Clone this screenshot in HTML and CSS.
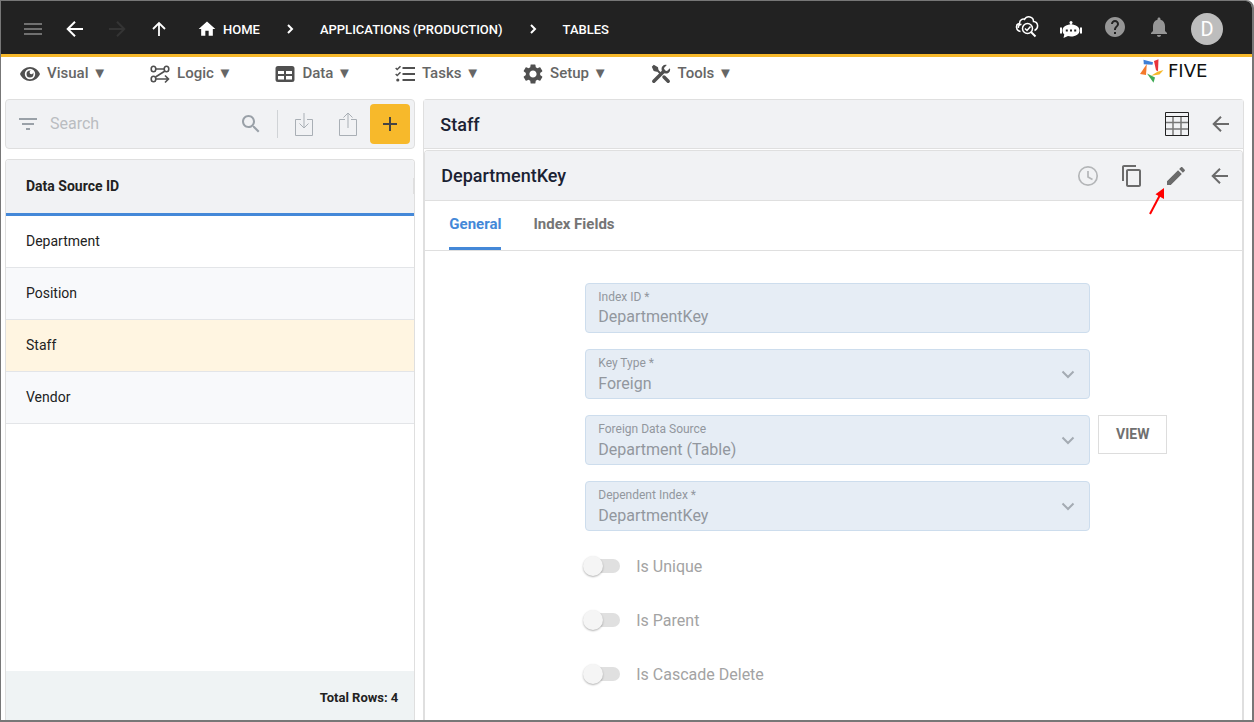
FILE: index.html
```html
<!DOCTYPE html>
<html lang="en">
<head>
<meta charset="utf-8">
<meta name="viewport" content="width=device-width, initial-scale=1">
<title>Five - Tables</title>
<link rel="stylesheet" href="styles.css">
</head>
<body>
<div class="window">
  <header class="topbar">
    <div class="history">
      <button class="icon-btn dim" aria-label="Menu"><svg width="24" height="24" viewBox="0 0 24 24"><path fill="currentColor" d="M3 18h18v-2H3v2zm0-5h18v-2H3v2zm0-7v2h18V6H3z"/></svg></button>
      <button class="icon-btn" aria-label="Back"><svg width="24" height="24" viewBox="0 0 24 24"><path fill="none" stroke="currentColor" stroke-width="2" d="M20 12H5M12 4.700L4.700 12L12 19.300"/></svg></button>
      <button class="icon-btn faint" aria-label="Forward" disabled><svg width="24" height="24" viewBox="0 0 24 24"><path fill="none" stroke="currentColor" stroke-width="2" d="M4 12H19M12 4.700L19.300 12L12 19.300"/></svg></button>
      <button class="icon-btn" aria-label="Up"><svg width="24" height="24" viewBox="0 0 24 24"><path fill="none" stroke="currentColor" stroke-width="1.800" d="M12 19V6M6 12L12 6L18 12"/></svg></button>
    </div>
    <nav class="crumbs" aria-label="Breadcrumb">
      <a href="#"><svg width="20" height="20" viewBox="0 0 24 24"><path fill="currentColor" d="M10 20v-6h4v6h5v-8h3L12 3 2 12h3v8z"/></svg>HOME</a>
      <svg class="sep" width="20" height="20" viewBox="0 0 20 20"><path fill="none" stroke="currentColor" stroke-width="2" d="M8 6l4 4-4 4"/></svg>
      <a href="#">APPLICATIONS (PRODUCTION)</a>
      <svg class="sep" width="20" height="20" viewBox="0 0 20 20"><path fill="none" stroke="currentColor" stroke-width="2" d="M8 6l4 4-4 4"/></svg>
      <a href="#">TABLES</a>
    </nav>
    <div class="account">
      <button class="tool raised" aria-label="Inspect"><svg width="24" height="24" viewBox="0 0 24 24" fill="none" stroke="currentColor" stroke-width="1.500"><path d="M5.500 17.500C.5 16.500.2 10 4.500 9.500C4.500 5.500 8 4.500 9.500 5.500C12 1 18.500 2.500 18.500 7.500C23.500 8 24 14.500 19.500 16.500M6.500 10.500C4.500 10 3 12 3.500 14"/><circle cx="12.500" cy="14.500" r="5"/><path d="M10 14.500l2 2 3.500-4"/><path stroke-width="2" d="M16 18l4.500 4.500"/></svg></button>
      <button class="tool" aria-label="Assistant"><svg width="24" height="24" viewBox="0 0 24 24" fill="currentColor"><circle cx="12" cy="5.500" r="1.500"/><path d="M11.300 6h1.400v3h-1.400zM1 10.500h2v6H1zM21 10.500h2v6h-2zM12 7.500c5 0 8.500 2.500 8.500 6s-3.500 6-8.500 6c-1 0-2-.1-3-.4L4.500 21l.8-3.400C4.200 16.500 3.500 15 3.500 13.500c0-3.500 3.500-6 8.500-6z"/><path fill="#222" d="M6.800 12.500h2v2h-2zM11 12.500h2v2h-2zM15.200 12.500h2v2h-2z"/></svg></button>
      <button class="tool gray" aria-label="Help"><svg width="24" height="24" viewBox="0 0 24 24"><path fill="currentColor" d="M12 2C6.480 2 2 6.480 2 12s4.480 10 10 10 10-4.480 10-10S17.520 2 12 2zm1 17h-2v-2h2v2zm2.070-7.750l-.9.920C13.450 12.900 13 13.500 13 15h-2v-.5c0-1.100.450-2.100 1.170-2.830l1.240-1.260c.370-.360.590-.860.590-1.410 0-1.100-.9-2-2-2s-2 .9-2 2H8c0-2.210 1.790-4 4-4s4 1.790 4 4c0 .880-.360 1.680-.930 2.250z"/></svg></button>
      <button class="tool gray" aria-label="Notifications"><svg width="24" height="24" viewBox="0 0 24 24"><path fill="currentColor" d="M12 22c1.100 0 2-.9 2-2h-4c0 1.100.890 2 2 2zm6-6v-5c0-3.070-1.640-5.640-4.500-6.320V4c0-.830-.670-1.500-1.500-1.500s-1.500.670-1.500 1.500v.680C7.630 5.360 6 7.920 6 11v5l-2 2v1h16v-1l-2-2z"/></svg></button>
      <button class="avatar" aria-label="Account">D</button>
    </div>
  </header>

  <div class="menubar">
    <nav class="menus" aria-label="Main">
      <button class="menu"><svg width="20" height="20" viewBox="0 0 20 20"><path fill="currentColor" fill-rule="evenodd" d="M10 3C5.500 3 1.700 5.900 0 10c1.700 4.100 5.500 7 10 7s8.300-2.900 10-7c-1.700-4.100-5.500-7-10-7zm0 12.200a5.200 5.200 0 1 1 0-10.400 5.200 5.200 0 0 1 0 10.400z"/><path fill="currentColor" d="M10 6.500a3.500 3.500 0 1 0 3.500 3.500c0-.5-.1-1-.3-1.400a1.800 1.800 0 1 1-2-2c-.4-.1-.8-.1-1.200-.1z"/></svg><span>Visual ▼</span></button>
      <button class="menu"><svg width="20" height="20" viewBox="0 0 20 20" fill="none" stroke="currentColor" stroke-width="1.600"><ellipse cx="3.500" cy="5" rx="2.300" ry="2.800"/><ellipse cx="16.500" cy="5" rx="2.300" ry="2.800"/><ellipse cx="3.500" cy="15" rx="2.300" ry="2.800"/><path d="M6 5h8M15 7L5.500 13M6 15h12.500M15 11.500l3.500 3.500-3.500 3.500"/></svg><span>Logic ▼</span></button>
      <button class="menu"><svg width="20" height="20" viewBox="0 0 20 20"><path fill="currentColor" fill-rule="evenodd" d="M3 2h14a2.500 2.500 0 0 1 2.500 2.500v11A2.500 2.500 0 0 1 17 18H3a2.500 2.500 0 0 1-2.500-2.500v-11A2.500 2.500 0 0 1 3 2zM3 7v3h6V7zm8 0v3h6V7zM3 12v3.500h6V12zm8 0v3.500h6V12z"/></svg><span>Data ▼</span></button>
      <button class="menu"><svg width="20" height="20" viewBox="0 0 20 20" fill="none" stroke="currentColor" stroke-width="2"><path d="M7.500 4H20M7.500 10H20M7.500 16H20"/><path stroke-width="1.500" d="M.7 4l1.500 1.500L5.500 2.200M.7 10l1.500 1.500L5.500 8.200"/><circle cx="2.800" cy="16" r="1.600" fill="currentColor" stroke="none"/></svg><span>Tasks ▼</span></button>
      <button class="menu"><svg width="20" height="20" viewBox="2 2 20 20"><path fill="currentColor" d="M19.140 12.940c.040-.3.060-.610.060-.940 0-.320-.020-.640-.070-.940l2.030-1.580a.490.490 0 0 0 .120-.610l-1.920-3.320a.488.488 0 0 0-.590-.220l-2.390.960c-.5-.380-1.030-.7-1.620-.940l-.360-2.540a.484.484 0 0 0-.480-.410h-3.840c-.240 0-.430.170-.470.410l-.360 2.540c-.590.240-1.130.570-1.620.940l-2.390-.960c-.220-.080-.470 0-.590.220L2.740 8.870c-.120.210-.080.470.120.610l2.030 1.580c-.050.3-.090.630-.090.940s.020.640.070.940l-2.030 1.580a.490.490 0 0 0-.120.610l1.920 3.320c.120.220.370.290.590.220l2.390-.960c.5.380 1.030.7 1.620.940l.360 2.540c.050.240.240.410.480.410h3.840c.240 0 .440-.170.470-.410l.360-2.540c.590-.240 1.130-.560 1.620-.940l2.390.960c.220.080.470 0 .590-.220l1.920-3.320c.120-.220.070-.470-.120-.610l-2.010-1.580zM12 15.600c-1.980 0-3.600-1.620-3.600-3.600s1.620-3.600 3.600-3.600 3.600 1.620 3.600 3.600-1.620 3.600-3.600 3.600z"/></svg><span>Setup ▼</span></button>
      <button class="menu"><svg width="20" height="20" viewBox="0 0 20 20"><path fill="none" stroke="currentColor" stroke-width="3.500" stroke-linecap="round" d="M2.800 17.200l10-10M13 13l4.200 4.200"/><path fill="none" stroke="currentColor" stroke-width="2" d="M3.500 3.500l7 7"/><path fill="currentColor" d="M.8 2.800L2.800.8l4.200 2.400.5 3-1.800 1.500-3-.7zM18.900 4.200L16 7l-2.500-.5L13 4 15.800 1.100C13.300.2 10.500 2 10.500 5c0 2.800 2.200 4.800 4.800 4.600 3-.3 4.500-2.900 3.600-5.400z"/></svg><span>Tools ▼</span></button>
    </nav>
    <a class="brand" href="#" aria-label="Five"><svg width="24" height="24" viewBox="0 0 24 24"><path fill="#3f7fd6" d="M3.500.8L13 3.200 12.500 5.800 3.800 5.200z"/><path fill="#e8343c" d="M14 2l4.500-1.800-.5 12-2-1z"/><path fill="#f6b82b" d="M23.500 11L19.500 15.500l-8.500 1.300 6.500-4z"/><path fill="#3faa55" d="M7 14.500l8 4-1.500 5.300z"/><path fill="#f4792b" d="M6.800 5L6 16 0 15z"/></svg><span>FIVE</span></a>
  </div>

  <main class="workspace">
    <section class="list-col">
      <div class="searchbar">
        <button class="filter" aria-label="Filter"><svg width="24" height="24" viewBox="0 0 24 24"><path fill="currentColor" d="M10 18h4v-2h-4v2zM3 6v2h18V6H3zm3 7h12v-2H6v2z"/></svg></button>
        <input class="search" type="search" placeholder="Search" aria-label="Search">
        <button class="find" aria-label="Run search"><svg width="24" height="24" viewBox="0 0 24 24"><path fill="currentColor" d="M15.500 14h-.790l-.280-.270C15.410 12.590 16 11.110 16 9.500 16 5.910 13.090 3 9.500 3S3 5.910 3 9.500 5.910 16 9.500 16c1.610 0 3.090-.590 4.230-1.570l.270.280v.790l5 4.990L20.490 19l-4.990-5zm-6 0C7.010 14 5 11.990 5 9.500S7.010 5 9.500 5 14 7.010 14 9.500 11.990 14 9.500 14z"/></svg></button>
        <button class="transfer first" aria-label="Import"><svg width="20" height="26" viewBox="0 0 20 26" fill="none" stroke="currentColor"><path d="M7 8.500H1.500v16h17v-16H13M10 2v15M5.500 12.500L10 17l4.500-4.500"/></svg></button>
        <button class="transfer" aria-label="Export"><svg width="20" height="26" viewBox="0 0 20 26" fill="none" stroke="currentColor"><path d="M7 8.500H1.500v16h17v-16H13M10 17V2M5.500 6.500L10 2l4.500 4.500"/></svg></button>
        <button class="add" aria-label="Add"><svg width="16" height="16" viewBox="0 0 16 16"><path fill="none" stroke="currentColor" stroke-width="2" d="M8 1v14M1 8h14"/></svg></button>
      </div>
      <div class="list">
        <table class="rows">
          <thead><tr><th scope="col"><div class="col-head">Data Source ID</div></th></tr></thead>
          <tbody>
            <tr><td>Department</td></tr>
            <tr><td>Position</td></tr>
            <tr class="selected"><td>Staff</td></tr>
            <tr><td>Vendor</td></tr>
          </tbody>
        </table>
        <div class="total">Total Rows: 4</div>
      </div>
    </section>

    <section class="detail">
      <div class="head parent">
        <h1>Staff</h1>
        <button class="tool" aria-label="Table view"><svg width="26" height="26" viewBox="0 0 26 26" fill="none"><path stroke="#777" stroke-width="1.500" d="M9 5v19M17 5v19M2 11.500h22M2 18h22"/><path stroke="#222" d="M1.500 1.500h23v23h-23zM1.500 5.500h23"/></svg></button>
        <button class="tool" aria-label="Back"><svg width="24" height="24" viewBox="0 0 24 24"><path fill="none" stroke="currentColor" stroke-width="2" d="M20 12H5M12 4.700L4.700 12L12 19.300"/></svg></button>
      </div>
      <section class="record">
        <div class="head">
          <h2>DepartmentKey</h2>
          <button class="tool pale" aria-label="History"><svg width="24" height="24" viewBox="0 0 24 24"><path fill="none" stroke="currentColor" stroke-width="1.700" d="M12 2.800a9.200 9.200 0 1 0 0 18.400a9.200 9.200 0 1 0 0-18.400M12 7v6l4.500 2.500"/></svg></button>
          <button class="tool" aria-label="Copy"><svg width="24" height="24" viewBox="0 0 24 24"><path fill="currentColor" d="M16 1H4c-1.100 0-2 .9-2 2v14h2V3h12V1zm3 4H8c-1.100 0-2 .9-2 2v14c0 1.100.9 2 2 2h11c1.100 0 2-.9 2-2V7c0-1.100-.9-2-2-2zm0 16H8V7h11v14z"/></svg></button>
          <button class="tool edit" aria-label="Edit"><svg width="24" height="24" viewBox="0 0 24 24"><path fill="currentColor" d="M3 17.250V21h3.750L17.810 9.940l-3.750-3.750L3 17.250zM20.710 7.040c.390-.390.390-1.020 0-1.410l-2.340-2.340c-.390-.390-1.020-.390-1.410 0l-1.830 1.830 3.750 3.750 1.830-1.830z"/></svg>
            <svg class="pointer" width="18" height="28" viewBox="0 0 18 28"><path stroke="#f00" stroke-width="2" d="M2 27L12 8"/><path fill="#f00" d="M16 1v11L7.500 7.300z"/></svg></button>
          <button class="tool" aria-label="Back"><svg width="24" height="24" viewBox="0 0 24 24"><path fill="none" stroke="currentColor" stroke-width="2" d="M20 12H5M12 4.700L4.700 12L12 19.300"/></svg></button>
        </div>
        <div class="tabs" role="tablist">
          <button class="tab active" role="tab" aria-selected="true">General</button>
          <button class="tab" role="tab" aria-selected="false">Index Fields</button>
        </div>
        <form class="form">
          <div class="field text">
            <label for="index-id">Index ID *</label>
            <input id="index-id" type="text" value="DepartmentKey" disabled>
          </div>
          <div class="field">
            <label for="key-type">Key Type *</label>
            <select id="key-type" disabled><option>Foreign</option></select>
            <svg width="24" height="24" viewBox="0 0 24 24"><path fill="none" stroke="currentColor" stroke-width="2" d="M6.500 8.500L12 14l5.500-5.500"/></svg>
          </div>
          <div class="field">
            <label for="source">Foreign Data Source</label>
            <select id="source" disabled><option>Department (Table)</option></select>
            <svg width="24" height="24" viewBox="0 0 24 24"><path fill="none" stroke="currentColor" stroke-width="2" d="M6.500 8.500L12 14l5.500-5.500"/></svg>
          </div>
          <button class="view" type="button">VIEW</button>
          <div class="field">
            <label for="dependent">Dependent Index *</label>
            <select id="dependent" disabled><option>DepartmentKey</option></select>
            <svg width="24" height="24" viewBox="0 0 24 24"><path fill="none" stroke="currentColor" stroke-width="2" d="M6.500 8.500L12 14l5.500-5.500"/></svg>
          </div>
          <div class="switches">
            <label class="switch"><input type="checkbox" disabled><span>Is Unique</span></label>
            <label class="switch"><input type="checkbox" disabled><span>Is Parent</span></label>
            <label class="switch"><input type="checkbox" disabled><span>Is Cascade Delete</span></label>
          </div>
        </form>
      </section>
    </section>
  </main>
</div>
</body>
</html>
```
FILE: styles.css
```css
:root {
  --line: #dfdfdf;
  --panel: #f1f2f4;
  --blue: #4488d8;
  --amber: #f7b92b;
}

* { box-sizing: border-box; }

body {
  margin: 0;
  background: #fff;
  color: #222;
  font-family: Roboto, "Noto Sans", sans-serif;
  font-size: 14px;
}

button, input, select { font: inherit; color: inherit; }

button {
  display: flex;
  align-items: center;
  justify-content: center;
  margin: 0;
  padding: 0;
  border: 0;
  background: none;
  cursor: pointer;
}

svg { display: block; flex: none; }
a { color: inherit; text-decoration: none; }

.window {
  display: flex;
  flex-direction: column;
  height: 100vh;
  border: solid #777;
  border-width: 1px 2px 2px 1px;
  border-top-right-radius: 8px;
  overflow: hidden;
}

/* Top bar */
.topbar {
  display: flex;
  align-items: center;
  flex: none;
  height: 56px;
  padding: 3px 29px 0 20px;
  border-bottom: 3px solid var(--amber);
  background: #222;
  color: #fff;
}
.history { display: flex; gap: 18px; margin-right: 26px; }
.icon-btn { width: 24px; height: 24px; }
.dim { color: #707070; }
.faint { color: #343434; }
.crumbs {
  display: flex;
  align-items: center;
  gap: 20px;
  font-size: 13px;
  font-weight: 500;
}
.crumbs a { display: flex; align-items: center; gap: 6px; white-space: nowrap; }
.account { display: flex; align-items: center; margin-left: auto; }
.tool { width: 44px; height: 44px; color: #6b6b6b; }
.account .tool { color: #fff; }
.account .gray { padding-bottom: 4px; color: #969696; }
.account .raised { padding-bottom: 6px; }
.avatar {
  width: 32px;
  height: 32px;
  margin-left: 10px;
  border-radius: 50%;
  background: #bdbdbd;
  color: #fff;
  font-size: 20px;
}

/* Menu bar */
.menubar {
  display: flex;
  align-items: flex-start;
  justify-content: space-between;
  flex: none;
  height: 42px;
  padding: 0 26px 0 19px;
}
.menus { display: flex; gap: 43px; }
.menu {
  gap: 7px;
  height: 34px;
  color: #505050;
  white-space: nowrap;
}
.menu span { padding-bottom: 2px; color: #666; font-size: 15px; font-weight: 500; }
.brand {
  display: flex;
  align-items: center;
  gap: 4px;
  height: 27px;
  color: #111;
  font-family: "DejaVu Sans", sans-serif;
  font-size: 18px;
}
.brand span { min-width: 58px; }

/* Workspace */
.workspace {
  display: grid;
  grid-template-columns: minmax(0, 1fr) minmax(0, 2fr);
  gap: 8px;
  flex: 1;
  min-height: 0;
  padding: 0 8px 0 4px;
}
.list-col { display: flex; flex-direction: column; gap: 10px; min-height: 0; }
.searchbar {
  display: flex;
  align-items: center;
  flex: none;
  height: 50px;
  padding: 0 4px 0 10px;
  border: 1px solid var(--line);
  border-radius: 4px;
  background: var(--panel);
  color: #9aa1a8;
}
.search {
  flex: 1;
  min-width: 0;
  height: 40px;
  margin-left: 10px;
  padding: 0 0 2px;
  border: 0;
  outline: 0;
  background: none;
  color: #222;
  font-size: 16px;
}
.search::placeholder { color: #babdc1; opacity: 1; }
.find { margin-right: 14px; }
.transfer { width: 44px; height: 28px; color: #a9afb5; }
.transfer.first { width: 49px; padding-left: 4px; border-left: 1px solid #d0d3d6; }
.add {
  width: 40px;
  height: 40px;
  border-radius: 4px;
  background: var(--amber);
  color: #444;
}

.list {
  display: flex;
  flex-direction: column;
  flex: 1;
  min-height: 0;
  border: 1px solid var(--line);
  border-bottom: 0;
  border-radius: 4px 4px 0 0;
  overflow: hidden;
}
.rows { width: 100%; border-collapse: separate; border-spacing: 0; text-align: left; }
.rows th {
  height: 56px;
  padding: 0 0 2px;
  border-bottom: 3px solid var(--blue);
  background: var(--panel);
  font-weight: 700;
}
.col-head { padding-left: 20px; border-right: 1px solid var(--line); }
.rows td {
  height: 52px;
  padding: 0 20px 2px;
  border-bottom: 1px solid #e3e5e8;
}
.rows tbody tr:nth-child(even) { background: #f8f9fb; }
.rows tbody .selected { background: #fff5e1; }
.total {
  margin-top: auto;
  padding: 19px 16px 14px;
  background: #eff3f4;
  font-size: 13px;
  font-weight: 700;
  line-height: 16px;
  text-align: right;
}

/* Detail panel */
.detail {
  display: flex;
  flex-direction: column;
  min-height: 0;
  border: 1px solid var(--line);
  border-bottom: 0;
  border-radius: 4px 4px 0 0;
}
.head {
  display: flex;
  align-items: center;
  flex: none;
  height: 50px;
  padding-left: 16px;
  border-bottom: 1px solid var(--line);
  background: var(--panel);
  color: #1b2233;
}
.head.parent { height: 49px; }
.head h1, .head h2 {
  flex: 1;
  margin: 0;
  font-size: 18px;
  font-weight: 500;
}
.pale { color: #b4b6b8; }
.edit { position: relative; }
.pointer { position: absolute; top: 33px; left: -6px; }
.record {
  display: flex;
  flex-direction: column;
  flex: 1;
  min-height: 0;
  margin-top: 1px;
  border: 1px solid var(--line);
  border-bottom: 0;
  border-radius: 4px 4px 0 0;
  overflow: hidden;
}
.tabs {
  display: flex;
  gap: 32px;
  flex: none;
  height: 50px;
  padding-left: 24px;
  border-bottom: 1px solid var(--line);
}
.tab {
  border-bottom: 3px solid transparent;
  color: #757575;
  font-size: 15px;
  font-weight: 700;
}
.tab.active { border-bottom-color: var(--blue); color: var(--blue); }

.form {
  display: grid;
  grid-template-columns: 160fr 505fr 152fr;
  gap: 16px 0;
  padding-top: 32px;
}
.field {
  display: grid;
  grid-column: 2;
  grid-template-columns: 1fr 24px;
  grid-template-rows: 16px 24px;
  align-items: center;
  height: 50px;
  padding: 5px 9px 3px 12px;
  border: 1px solid #cddded;
  border-radius: 4px;
  background: #e6edf5;
  color: #92979e;
}
.field.text { grid-template-rows: 16px 22px; }
.field label { grid-area: 1 / 1; font-size: 12px; }
.field input, .field select {
  grid-area: 2 / 1;
  width: 100%;
  height: 24px;
  margin: 0;
  padding: 0;
  border: 0;
  appearance: none;
  background: none;
  color: #92979e;
  font-size: 16px;
  opacity: 1;
}
.field svg { grid-area: 1 / 2 / 3 / 3; color: #a4abb3; }
.view {
  grid-column: 3;
  grid-row: 3;
  justify-self: start;
  height: 39px;
  margin-left: 8px;
  padding: 0 17px 2px;
  border: 1px solid #ddd;
  color: #707070;
  font-weight: 700;
}
.switches { display: grid; grid-column: 2; gap: 30px; padding-top: 7px; }
.switch {
  display: flex;
  align-items: center;
  gap: 16px;
  height: 24px;
  color: #a3a3a3;
  font-size: 16px;
}
.switch input {
  position: relative;
  width: 34px;
  height: 14px;
  margin: 0 0 0 1px;
  border-radius: 7px;
  appearance: none;
  background: #e0e0e0;
}
.switch input::before {
  content: "";
  position: absolute;
  top: -3px;
  left: -3px;
  width: 20px;
  height: 20px;
  border-radius: 50%;
  background: #f5f5f5;
  box-shadow: 0 1px 2px rgb(0 0 0 / 30%);
}
```
